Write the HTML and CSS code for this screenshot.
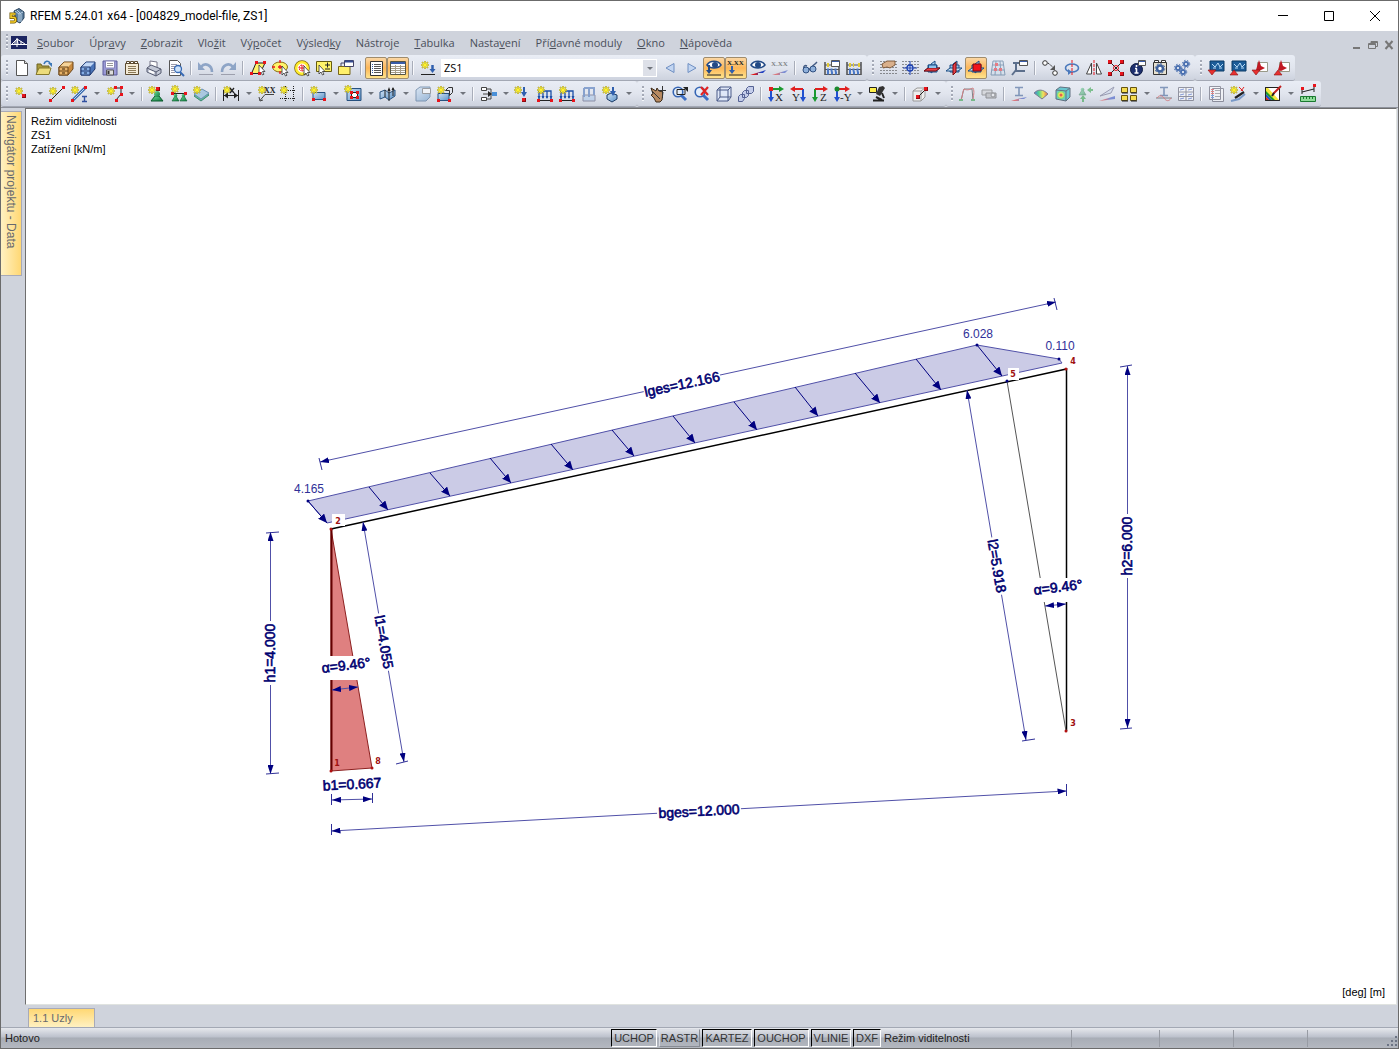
FILE: index.html
```html
<!DOCTYPE html>
<html lang="cs">
<head>
    <meta charset="UTF-8">
    <meta name="viewport" content="width=device-width, initial-scale=1.0">
    <title>RFEM 5.24.01 x64 - [004829_model-file, ZS1]</title>
    <link rel="stylesheet" href="styles.css">
</head>
<body>
<!-- shared icon parts -->
<svg class="defs" aria-hidden="true">
    <defs>
        <linearGradient id="gBlue" x1="0" y1="0" x2="1" y2="1"><stop offset="0" stop-color="#cfe2f5"/><stop offset="1" stop-color="#5b92c8"/></linearGradient>
        <linearGradient id="gGreen" x1="0" y1="0" x2="1" y2="1"><stop offset="0" stop-color="#6fdc98"/><stop offset="1" stop-color="#0f7a3e"/></linearGradient>
        <linearGradient id="gWedge" x1="0" x2="1"><stop offset=".3" stop-color="#e01818"/><stop offset=".7" stop-color="#2040c0"/></linearGradient>
        <linearGradient id="gRain" x1="0" x2="1"><stop offset="0" stop-color="#2a5be0"/><stop offset=".35" stop-color="#2fd07a"/><stop offset=".65" stop-color="#f4e63a"/><stop offset="1" stop-color="#e8402a"/></linearGradient>
        <g id="star"><path d="M4 0v8M0 4h8M1 1l6 6M7 1l-6 6" stroke="#a59a2c" stroke-width="1.6"/><path d="M4 .5v7M.5 4h7M1.5 1.5l5 5M6.5 1.5l-5 5" stroke="#fff22e" stroke-width="1"/><circle cx="4" cy="4" r="1.6" fill="#fff22e"/></g>
        <g id="n"><path d="M0 0h4v4h-4z" fill="#e8141c"/><path d="M0 3.500h4M3.500 0v4" stroke="#8c0a10"/></g>
        <g id="ns"><path d="M0 0h3v3h-3z" fill="#e8141c"/></g>
        <g id="cursor"><path d="M0 0v9l2-2 1.500 3 1.500-.8-1.500-2.700H6z" fill="#fff" stroke="#333" stroke-width=".8"/></g>
        <g id="cone"><path d="M3 4L0 9h7L4 4z" fill="url(#gGreen)" stroke="#0b5a2c" stroke-width=".6"/><circle cx="3.500" cy="3.500" r="1.800" fill="url(#gGreen)"/></g>
        <g id="dots"><path d="M.5 1.500h16M.5 4.500h16M.5 7.500h16M.5 10.500h16M.5 13.500h16" stroke="#333" stroke-dasharray="1 2"/></g>
        <g id="loads"><path d="M2 13V5h12v8M6 5v7M10 5v7" fill="none" stroke="#1d50a8" stroke-width="1.300"/><path d="M.5 10h3L2 13zM4.500 10h3L6 13zM8.500 10h3L10 13zM12.500 10h3L14 13z" fill="#1d50a8"/><path d="M0 14.500h16" stroke="#222"/></g>
        <g id="planes"><path d="M7 4l4-3v9l-4 3z" fill="#a9d2f2" stroke="#1d4f86"/><path d="M4 5h9v7H4z" fill="#8fc4ee" stroke="#1d4f86"/><path d="M0 11l4-3h12l-4 3z" fill="#c4e0f6" stroke="#1d4f86"/></g>
        <g id="glass"><path d="M9 9l5 5" stroke="#3d6fc4" stroke-width="3"/><circle cx="6" cy="6" r="4.800" fill="#e6f1fd" fill-opacity=".7" stroke="#3565b4" stroke-width="1.600"/></g>
        <g id="abacus"><path d="M1 2v13M15 2v13" stroke="#444" stroke-width="1.400"/><path d="M1 5h14M1 9.500h14M1 14.500h14" stroke="#555"/><path d="M3 5h2M7 5h1M12 5h2" stroke="#e3cb35" stroke-width="4"/><path d="M3 10h2M6.500 10h2M10.500 10h2M3 13h2M7 13h2M11 13h2" stroke="#4a78c8" stroke-width="3"/></g>
        <g id="screen"><path d="M2 1h14v10H2z" fill="#1c5c98" stroke="#0b3a66"/><path d="M4 4l3 3 3-4 2 4 3-3M5 8h3M11 8h3" stroke="#b8dcf8" fill="none"/></g>
    </defs>
</svg>

<div class="window">
    <header class="titlebar">
        <svg class="app-icon" viewBox="0 0 16 16"><path d="M5 3l5-2.500 5 3.500v6l-4 5-4-2z" fill="#5d7f9e" stroke="#27415c"/><path d="M6 3l4 3 4-2M8 2l4 4v8M10 6v8" stroke="#b9d0e4" fill="none"/><path d="M6.500 6H2v3.500h3c2 0 2 4.500 0 4.500H1" fill="none" stroke="#6e5600" stroke-width="3"/><path d="M6.500 6H2v3.500h3c2 0 2 4.500 0 4.500H1" fill="none" stroke="#f6ce2c" stroke-width="1.600"/></svg>
        <h1>RFEM 5.24.01 x64 - [004829_model-file, ZS1]</h1>
        <div class="window-buttons">
            <button type="button" aria-label="Minimalizovat"><svg viewBox="0 0 12 12"><path d="M1 5.500h10"/></svg></button>
            <button type="button" aria-label="Maximalizovat"><svg viewBox="0 0 12 12"><path d="M1.500 1.500h9v9h-9z"/></svg></button>
            <button type="button" aria-label="Zavřít"><svg viewBox="0 0 12 12"><path d="M1 1l10 10M11 1L1 11"/></svg></button>
        </div>
    </header>

    <nav class="menubar">
        <span class="grip"></span>
        <svg class="doc-icon" viewBox="0 0 16 13"><path d="M0 0h16v13H0z" fill="#1b2460"/><path d="M0 8.500h16M1 8l5-5 1 5M6 2v9M6 3l8 5M10 5v3M4 8V5" stroke="#fff" fill="none"/></svg>
        <button type="button"><u>S</u>oubor</button>
        <button type="button">Úpr<u>a</u>vy</button>
        <button type="button"><u>Z</u>obrazit</button>
        <button type="button">Vlo<u>ž</u>it</button>
        <button type="button">Vý<u>p</u>očet</button>
        <button type="button">Výsled<u>k</u>y</button>
        <button type="button">Nástro<u>j</u>e</button>
        <button type="button"><u>T</u>abulka</button>
        <button type="button">Nasta<u>v</u>ení</button>
        <button type="button">Pří<u>d</u>avné moduly</button>
        <button type="button"><u>O</u>kno</button>
        <button type="button"><u>N</u>ápověda</button>
        <div class="mdi-buttons">
            <button type="button" aria-label="Minimalizovat dokument"><svg viewBox="0 0 10 10"><path d="M1 8h7" stroke-width="2"/></svg></button>
            <button type="button" aria-label="Obnovit dokument"><svg viewBox="0 0 10 10"><path d="M3 3V1.500h6.500v5H8M.5 3.500h7v5h-7zM.5 4.500h7M3 2.500h6"/></svg></button>
            <button type="button" aria-label="Zavřít dokument"><svg viewBox="0 0 10 10"><path d="M1.500 1l7 8M8.500 1l-7 8" stroke-width="2"/></svg></button>
        </div>
    </nav>

    <div class="toolbar-row">
        <div class="toolbar">
            <span class="grip"></span>
            <button type="button" class="tool" aria-label="Nový"><svg><path d="M2.500.5h8l3 3v12h-11z" fill="#fff" stroke="#555"/><path d="M10.500.5v3h3" fill="#ddd" stroke="#555"/></svg></button>
            <button type="button" class="tool" aria-label="Otevřít"><svg><path d="M1 14V4h4l1 2h7v8z" fill="#a99a3e" stroke="#6f6420"/><path d="M0 14.500L3 8h12l-2 6.500z" fill="#ecdc7c" stroke="#85782c"/><path d="M8 4c1-3 4-4 6-1" fill="none" stroke="#3c78b8" stroke-width="1.600"/><path d="M12 3h4v4z" fill="#3c78b8"/></svg></button>
            <button type="button" class="tool" aria-label="Projekty"><svg><path d="M1 7l5-5h9v7l-5 6H1z" fill="#c98a3e" stroke="#6b4518"/><path d="M1.500 7L6 2.500h8.500L10 7z" fill="#f6d49a"/><path d="M1 7h9v8H1z" fill="#e9b46a" stroke="#6b4518"/><path d="M1 11h9" stroke="#6b4518"/><path d="M4 9h3M4 13h3" stroke="#3a2208"/></svg></button>
            <button type="button" class="tool" aria-label="Bloky"><svg><path d="M1 7l5-5h9v7l-5 6H1z" fill="#4a74b8" stroke="#1b356c"/><path d="M1.500 7L6 2.500h8.500L10 7z" fill="#c2d8f6"/><path d="M1 7h9v8H1z" fill="#86aee6" stroke="#1b356c"/><path d="M1 11h9" stroke="#1b356c"/><path d="M4 9h3M4 13h3" stroke="#10254e"/></svg></button>
            <button type="button" class="tool" aria-label="Uložit"><svg><path d="M1 1h14v14H1z" fill="#9a9ad6" stroke="#5c5c9c"/><path d="M3.500 1h9v7h-9z" fill="#fff" stroke="#88b"/><path d="M5 3.500h6M5 5.500h6" stroke="#999"/><path d="M4.500 10h7v5h-7z" fill="#ddd" stroke="#555"/><path d="M6.500 11v3" stroke="#333" stroke-width="2"/></svg></button>
            <button type="button" class="tool" aria-label="Protokol"><svg><path d="M1.500 3.500h13v11h-13z" fill="#f3ead6" stroke="#5b4a30"/><path d="M2.500 3V1.500h3V3M6.500 3V1.500h3V3M10.500 3V1.500h3V3" fill="#fff" stroke="#5b4a30"/><path d="M4 6.500h8M4 8.500h8M4 10.500h8M4 12.500h8" stroke="#8c7a58"/></svg></button>
            <button type="button" class="tool" aria-label="Tisk"><svg><path d="M4 6V1l7 1v5" fill="#fff" stroke="#778"/><path d="M1 8l4-3 10 4v4l-5 3-9-4z" fill="#c3c8d6" stroke="#555b70"/><path d="M1 8l9 4 5-3M10 12v4" stroke="#555b70" fill="none"/><path d="M3 11l5 2" stroke="#fff" stroke-width="2"/></svg></button>
            <button type="button" class="tool" aria-label="Náhled"><svg><path d="M1.500.5h8l3 3v12h-11z" fill="#fff" stroke="#555"/><path d="M3 4.500h6M3 6.500h5M3 8.500h3M3 10.500h3M3 12.500h4" stroke="#99a"/><circle cx="10" cy="9" r="3.500" fill="#cfe4fa" stroke="#3769b4" stroke-width="1.300"/><path d="M12 12l4 4" stroke="#3769b4" stroke-width="2"/></svg></button>
            <span class="sep"></span>
            <button type="button" class="tool dim" aria-label="Zpět"><svg><path d="M3 7c4-5 11-2 11 5" fill="none" stroke="#3d66a0" stroke-width="2.600"/><path d="M0 2v8h7z" fill="#3d66a0"/><path d="M1 14.500h14" stroke="#667"/></svg></button>
            <button type="button" class="tool dim" aria-label="Znovu"><svg><path d="M13 7C9 2 2 5 2 12" fill="none" stroke="#3d66a0" stroke-width="2.600"/><path d="M16 2v8H9z" fill="#3d66a0"/><path d="M1 14.500h14" stroke="#667"/></svg></button>
            <span class="sep"></span>
            <button type="button" class="tool" aria-label="Výběr rovnoběžníkem"><svg><path d="M1.500 13.500L6 3h9l-5 10.500z" fill="#fff36a" stroke="#222"/><use href="#cursor" x="9" y="5"/><use href="#ns" x="5" y="1"/><use href="#ns" x="13" y="1"/><use href="#ns" x="0" y="12"/><use href="#ns" x="8" y="12"/></svg></button>
            <button type="button" class="tool" aria-label="Výběr elipsou"><svg><ellipse cx="8" cy="7" rx="7.500" ry="5" fill="#fff36a" stroke="#8a6f10"/><path d="M8 0v3M8 11v3M0 7h3M6 7h4M8 5v4" stroke="#e8141c" stroke-width="1.300"/><use href="#cursor" x="10" y="6"/></svg></button>
            <button type="button" class="tool" aria-label="Výběr prstencem"><svg><circle cx="8" cy="8" r="5.800" fill="none" stroke="#7c6a10" stroke-width="4"/><circle cx="8" cy="8" r="5.800" fill="#fff" stroke="#ffec2e" stroke-width="2.500"/><circle cx="8" cy="8" r="3" fill="none" stroke="#e8141c" stroke-dasharray="2 1"/><path d="M8 5v6M5 8h6" stroke="#e8141c"/><use href="#cursor" x="10" y="6"/></svg></button>
            <button type="button" class="tool" aria-label="Přidat k výběru"><svg><path d="M.5 1.500h15v10H.5z" fill="#fff36a" stroke="#665c10"/><path d="M9 5h5M11.500 2.500v5M9 9h5" stroke="#222"/><use href="#cursor" x="3" y="5"/></svg></button>
            <button type="button" class="tool" aria-label="Upravit okno"><svg><path d="M.5 6.500H12v8H.5z" fill="#fff06a" stroke="#77661a"/><path d="M6.500.5h9v6h-9z" fill="#fff" stroke="#446"/><path d="M7 1.500h8" stroke="#334a90" stroke-width="2"/><path d="M3 6V3h3" stroke="#446" fill="none"/></svg></button>
            <span class="sep"></span>
            <button type="button" class="tool active" aria-label="Navigátor"><svg><path d="M2.500 1.500h12v14h-12z" fill="#fff" stroke="#333"/><path d="M6 4.500h7M6 6.500h7M6 8.500h7M6 10.500h7M6 12.500h7" stroke="#555"/><path d="M4.500 4v10" stroke="#335ca8" stroke-dasharray="1 1"/></svg></button>
            <button type="button" class="tool active" aria-label="Tabulky"><svg><path d="M.5 1.500h15v13H.5z" fill="#fff" stroke="#554"/><path d="M1 3h14" stroke="#3a5ca8" stroke-width="2"/><path d="M1 6.500h14M1 8.500h14M1 10.500h14M1 12.500h14M5.500 5v9M10.500 5v9" stroke="#a59c88"/></svg></button>
            <span class="sep"></span>
            <button type="button" class="tool" aria-label="Nový zatěžovací stav"><svg><use href="#star" x="1" y="1"/><path d="M12.500 5v6" stroke="#2f5fae" stroke-width="2.500"/><path d="M9.500 9h6l-3 4z" fill="#2f5fae"/><path d="M1 14.500h14" stroke="#222"/></svg></button>
            <span class="combo"><select aria-label="Zatěžovací stav"><option>ZS1</option></select></span>
            <button type="button" class="tool" aria-label="Předchozí"><svg><path d="M12 3.500v9L4 8z" fill="#c3d6f2" stroke="#6f8fc2"/></svg></button>
            <button type="button" class="tool" aria-label="Další"><svg><path d="M4 3.500v9L12 8z" fill="#c3d6f2" stroke="#6f8fc2"/></svg></button>
            <button type="button" class="tool active" aria-label="Zobrazit zatížení"><svg><path d="M1 5c3-5 11-5 14 0-3 4-11 4-14 0z" fill="#fff" stroke="#234a86" stroke-width="1.500"/><circle cx="9" cy="5" r="3" fill="#234a86"/><path d="M3 5v7" stroke="#234a86" stroke-width="2"/><path d="M0 10h6l-3 4z" fill="#234a86"/><path d="M1 15h14" stroke="#222"/></svg></button>
            <button type="button" class="tool active" aria-label="Hodnoty zatížení"><svg><text x="-1" y="5" class="icon-text small">X.XX</text><path d="M4 6v5" stroke="#2f5fae" stroke-width="2"/><path d="M1 10h6l-3 4z" fill="#2f5fae"/><path d="M1 15h14" stroke="#222"/></svg></button>
            <button type="button" class="tool" aria-label="Zobrazit výsledky"><svg><path d="M1 5c3-5 11-5 14 0-3 4-11 4-14 0z" fill="#fff" stroke="#234a86" stroke-width="1.500"/><circle cx="8" cy="5" r="3" fill="#234a86"/><path d="M0 15l8-2.500V15zM8 12.500L16 10l-3 3H8z" fill="url(#gWedge)"/></svg></button>
            <button type="button" class="tool dim" aria-label="Hodnoty výsledků"><svg><text x="-1" y="6" class="icon-text small">X.XX</text><path d="M0 15l8-2.500V15zM8 12.500L16 10l-3 3H8z" fill="url(#gWedge)"/></svg></button>
            <span class="sep"></span>
            <button type="button" class="tool" aria-label="Viditelnost"><svg><path d="M2 9c-1-3 1-4 3-3M7 10c2-3 4-4 8-8" fill="none" stroke="#445c84" stroke-width="1.500"/><circle cx="4" cy="10" r="3" fill="#8fb0da" stroke="#2f4f80"/><circle cx="11" cy="9" r="3" fill="#8fb0da" stroke="#2f4f80"/></svg></button>
            <button type="button" class="tool" aria-label="Nastavení výpočtu"><svg><use href="#abacus"/><path d="M7.500.5h8v6h-8z" fill="#fff" stroke="#555"/><path d="M8 1.500h7" stroke="#3a5ca8"/></svg></button>
            <button type="button" class="tool" aria-label="Spočítat vše"><svg><use href="#abacus"/></svg></button>
        </div>
        <div class="toolbar">
            <span class="grip"></span>
            <button type="button" class="tool" aria-label="Rastr"><svg><use href="#dots"/><path d="M2 4l5-3h8v4l-5 3-3-1-4 1z" fill="#d9b08c" stroke="#6a4424" stroke-width=".8"/></svg></button>
            <button type="button" class="tool" aria-label="Uchopení"><svg><use href="#dots"/><circle cx="8" cy="8" r="3" fill="#dbe8ff" stroke="#1a3fb0" stroke-width="1.300"/><path d="M8 1v14M1 8h14" stroke="#1a3fb0"/></svg></button>
            <button type="button" class="tool" aria-label="Rovina XY"><svg><use href="#planes"/><path d="M0 11l4-3h12l-4 3z" fill="#e8414a" stroke="#7a0a0e"/><path d="M4.500 8V5h8v3" fill="#8fc4ee" stroke="#1d4f86"/></svg></button>
            <button type="button" class="tool" aria-label="Rovina YZ"><svg><use href="#planes"/><path d="M7 5l3-3v10l-3 3z" fill="#e8414a" stroke="#7a0a0e"/></svg></button>
            <button type="button" class="tool active" aria-label="Rovina XZ"><svg><use href="#planes"/><path d="M5 4h8v7H5z" fill="#f0141c" stroke="#7a0a0e"/></svg></button>
            <button type="button" class="tool dim" aria-label="Síť"><svg><path d="M3 1h10l2 14H1zM2 5h12M1.500 10h13M6 1L5 15M10 1l1 14" fill="#d4e2f0" stroke="#345c84"/><use href="#ns" x="5" y="3"/><use href="#ns" x="9" y="8"/><use href="#ns" x="4" y="8"/></svg></button>
            <button type="button" class="tool" aria-label="Souřadný systém"><svg><path d="M4 2v9h9" stroke="#5c6f8c" fill="none" stroke-width="2"/><path d="M4 10l-4 5" stroke="#5c6f8c" stroke-width="2"/><path d="M7.500.5h8v5h-8z" fill="#fff" stroke="#555"/><path d="M8 1.500h7" stroke="#3a5ca8"/><path d="M1 3h6" stroke="#5c6f8c" stroke-width="2"/></svg></button>
            <span class="sep"></span>
            <button type="button" class="tool" aria-label="Posunout"><svg><circle cx="3" cy="3" r="2.300" fill="#fff" stroke="#333"/><circle cx="13" cy="13" r="2.300" fill="#fff" stroke="#333"/><path d="M6 3l6 5" stroke="#333" stroke-dasharray="2 1"/><path d="M13 5v5H8z" fill="#555"/></svg></button>
            <button type="button" class="tool" aria-label="Otočit"><svg><ellipse cx="8" cy="8" rx="6.500" ry="4" fill="none" stroke="#4a79bc" stroke-width="1.600"/><path d="M4 9v6l4-3z" fill="#4a79bc"/><path d="M8 0v16" stroke="#e8141c" stroke-dasharray="3 1"/></svg></button>
            <button type="button" class="tool" aria-label="Zrcadlit"><svg><path d="M5.500 3v11H.5zM10.500 3v11h5z" fill="#fff" stroke="#444"/><path d="M8 0v16" stroke="#e8141c" stroke-dasharray="3 1"/></svg></button>
            <button type="button" class="tool" aria-label="Spojit"><svg><path d="M2 2l12 12M14 2L2 14" stroke="#222"/><circle cx="8" cy="8" r="2.500" fill="none" stroke="#e8141c"/><use href="#n" x="0" y="0"/><use href="#n" x="12" y="0"/><use href="#n" x="0" y="12"/><use href="#n" x="12" y="12"/></svg></button>
            <button type="button" class="tool" aria-label="Informace"><svg><circle cx="6.500" cy="9.500" r="6" fill="#1d2f6e" stroke="#0d1940"/><path d="M6.500 5v2M6.500 8.500v4.500M5 8.500h2M4.500 13h4" stroke="#fff" stroke-width="1.600"/><path d="M8.500.5h7v5h-7z" fill="#fff" stroke="#555"/><path d="M9 1.500h6" stroke="#3a5ca8"/></svg></button>
            <button type="button" class="tool" aria-label="Přídavný modul"><svg><path d="M1.500 2.500h13v12h-13z" fill="#e8e2d0" stroke="#333"/><path d="M2.500 2V.5h4V2M9.500 2V.5h4V2" stroke="#333" fill="#fff"/><circle cx="8" cy="8.500" r="3" fill="#fff" stroke="#3e619c" stroke-width="2.500"/><circle cx="8" cy="8.500" r="4.800" fill="none" stroke="#3e619c" stroke-dasharray="2 1.700"/></svg></button>
            <button type="button" class="tool" aria-label="Nastavení"><svg><g fill="#fff" stroke="#4a70b0" stroke-width="2"><circle cx="4" cy="8" r="2"/><circle cx="9" cy="12" r="2"/><circle cx="12" cy="4" r="2"/></g><g fill="none" stroke="#4a70b0" stroke-dasharray="1.500 1.500"><circle cx="4" cy="8" r="3.700"/><circle cx="9" cy="12" r="3.700"/><circle cx="12" cy="4" r="3.700"/></g></svg></button>
        </div>
        <div class="toolbar">
            <span class="grip"></span>
            <button type="button" class="tool" aria-label="Import"><svg><use href="#screen"/><path d="M0 10h8l-4 5z" fill="#e83030" stroke="#8a1010" stroke-width=".6"/></svg></button>
            <button type="button" class="tool" aria-label="Export"><svg><use href="#screen"/><path d="M0 15h8l-4-5z" fill="#e83030" stroke="#8a1010" stroke-width=".6"/></svg></button>
            <button type="button" class="tool" aria-label="Import PDF"><svg><path d="M5.500 2.500h10v9h-10z" fill="#fff" stroke="#998"/><path d="M7 0l2 6 4 2-6 3-3-1z" fill="#c01822"/><path d="M0 10h8l-4 5z" fill="#e83030" stroke="#8a1010" stroke-width=".6"/></svg></button>
            <button type="button" class="tool" aria-label="Export PDF"><svg><path d="M5.500 2.500h10v9h-10z" fill="#fff" stroke="#998"/><path d="M7 0l2 6 4 2-6 3-3-1z" fill="#c01822"/><path d="M0 15h8l-4-5z" fill="#e83030" stroke="#8a1010" stroke-width=".6"/></svg></button>
        </div>
    </div>

    <div class="toolbar-row">
        <div class="toolbar">
            <span class="grip"></span>
            <button type="button" class="tool" aria-label="Nový uzel"><svg><use href="#star" x="1" y="1"/><use href="#n" x="8" y="8"/></svg></button>
            <button type="button" class="drop" aria-label="Uzel, možnosti"></button>
            <button type="button" class="tool" aria-label="Nová linie"><svg><use href="#star" x="0" y="1"/><path d="M2 14L14 2" stroke="#222"/><use href="#ns" x="13" y="0"/><use href="#ns" x="0" y="13"/></svg></button>
            <button type="button" class="tool" aria-label="Nový prut"><svg><use href="#star" x="0" y="0"/><path d="M2 14L14 2" stroke="#3768ac" stroke-width="3"/><path d="M3 13L13 3" stroke="#bcd6f2"/><use href="#ns" x="0" y="13"/><use href="#ns" x="13" y="0"/><path d="M11 10.500h5M11 15.500h5M13.500 10v5" stroke="#3050a0" stroke-width="1.400"/></svg></button>
            <button type="button" class="drop" aria-label="Prut, možnosti"></button>
            <button type="button" class="tool" aria-label="Nová lomená linie"><svg><use href="#star" x="1" y="1"/><path d="M9 2h6v6l-5 6" stroke="#222" fill="none"/><use href="#ns" x="8" y="0"/><use href="#ns" x="14" y="0"/><use href="#ns" x="14" y="7"/><use href="#ns" x="9" y="13"/></svg></button>
            <button type="button" class="drop" aria-label="Lomená linie, možnosti"></button>
            <span class="sep"></span>
            <button type="button" class="tool" aria-label="Uzlová podpora"><svg><path d="M6 10l-4 5h12l-4-5z" fill="url(#gGreen)" stroke="#0b5a2c"/><circle cx="8" cy="8" r="3" fill="url(#gGreen)"/><use href="#star" x="-1" y="0"/><use href="#n" x="7" y="1"/></svg></button>
            <button type="button" class="tool" aria-label="Liniová podpora"><svg><path d="M1 7.500h14" stroke="#222"/><use href="#cone" x="1" y="6"/><use href="#cone" x="9" y="6"/><use href="#star" x="0" y="-1"/><use href="#ns" x="0" y="6"/><use href="#ns" x="13" y="6"/></svg></button>
            <button type="button" class="tool" aria-label="Plošná podpora"><svg><path d="M1 10l8-5 7 4-8 6z" fill="#64bd9a" stroke="#3c8a70"/><path d="M1 8l8-5 7 4-8 6z" fill="#a9c8e0" stroke="#6890b4"/><use href="#star" x="0" y="0"/></svg></button>
            <span class="sep"></span>
            <button type="button" class="tool" aria-label="Kóta"><svg><use href="#star" x="0" y="0"/><path d="M.5 4v11M15.500 4v11M1 9.500h14" stroke="#222"/><path d="M1 9.500l4-3v6zM15 9.500l-4-3v6z" fill="#222"/><path d="M7 2l4 5M11 2L7 7" stroke="#222" stroke-width="1.300"/></svg></button>
            <button type="button" class="drop" aria-label="Kóta, možnosti"></button>
            <button type="button" class="tool" aria-label="Komentář"><svg><use href="#star" x="0" y="0"/><text x="6" y="7" class="icon-text">XX</text><path d="M16 8.500H7l-5 6M1 11l1 4 3-1" stroke="#444" fill="none"/></svg></button>
            <button type="button" class="tool" aria-label="Vodicí linie"><svg><path d="M5.500 0v16M13.500 0v16M0 4.500h16M0 12.500h16" stroke="#222" stroke-dasharray="1 1"/><use href="#star" x="0" y="0"/></svg></button>
            <span class="sep"></span>
            <button type="button" class="tool" aria-label="Nová plocha"><svg><path d="M3 6.500h12v7H3z" fill="url(#gBlue)" stroke="#27517f"/><use href="#star" x="0" y="0"/><use href="#ns" x="2" y="12"/><use href="#ns" x="13" y="12"/></svg></button>
            <button type="button" class="drop" aria-label="Plocha, možnosti"></button>
            <button type="button" class="tool" aria-label="Nový otvor"><svg><path d="M2 2.500h14v12H2z" fill="url(#gBlue)" stroke="#27517f"/><path d="M6.500 6.500h6v5h-6z" fill="#fff" stroke="#222"/><use href="#star" x="-1" y="-1"/><use href="#ns" x="5" y="10"/><use href="#ns" x="11" y="10"/><use href="#ns" x="11" y="5"/><use href="#ns" x="5" y="5"/></svg></button>
            <button type="button" class="drop" aria-label="Otvor, možnosti"></button>
            <button type="button" class="tool" aria-label="Rozdělit plochu"><svg><path d="M0 6l5-2 4 3 6-3v6l-6 4-4-3-5 2z" fill="url(#gBlue)" stroke="#27517f"/><path d="M5 4v7M9 3v12M13 2v8" stroke="#222"/><path d="M7.500 5L9 1l1.500 4zM11.500 4L13 1l1.500 3z" fill="#222"/></svg></button>
            <button type="button" class="drop" aria-label="Rozdělit, možnosti"></button>
            <button type="button" class="tool dim" aria-label="Nové těleso"><svg><path d="M1 4l4-3h10v10l-4 4H1z" fill="url(#gBlue)" stroke="#27517f"/><path d="M7.500 2.500h8v5h-8z" fill="#fff" stroke="#555"/></svg></button>
            <button type="button" class="tool" aria-label="Nové těleso z ploch"><svg><path d="M1 7.500h11v7H1z" fill="url(#gBlue)" stroke="#27517f"/><path d="M8.500 4.500l3-3h4v5l-3 3M8.500 4.500h4v5" stroke="#333" fill="none"/><use href="#star" x="0" y="0"/><use href="#ns" x="0" y="13"/><use href="#ns" x="11" y="13"/></svg></button>
            <button type="button" class="drop" aria-label="Těleso, možnosti"></button>
            <span class="sep"></span>
            <button type="button" class="tool" aria-label="Kombinace"><svg><path d="M1.500 1.500h5v3h-5zM1.500 11.500h5v3h-5z" fill="#fff" stroke="#444"/><path d="M7 3h4v10H7M3 8h6" stroke="#444" fill="none"/><path d="M8 5l4 3-4 3z" fill="#222"/><path d="M12 6h5v4h-5z" fill="#4a90d8"/></svg></button>
            <button type="button" class="drop" aria-label="Kombinace, možnosti"></button>
            <button type="button" class="tool" aria-label="Zatížení na uzel"><svg><use href="#star" x="-1" y="0"/><path d="M9 1v7" stroke="#2f5fae" stroke-width="2"/><path d="M6 6h6l-3 5z" fill="#2f5fae"/><use href="#n" x="7" y="12"/></svg></button>
            <button type="button" class="tool" aria-label="Zatížení na prut"><svg><use href="#loads"/><use href="#star" x="0" y="0"/><use href="#ns" x="0" y="13"/><use href="#ns" x="13" y="13"/></svg></button>
            <button type="button" class="tool" aria-label="Zatížení na linii"><svg><use href="#loads"/><use href="#star" x="0" y="0"/><use href="#ns" x="0" y="13"/><use href="#ns" x="13" y="13"/></svg></button>
            <button type="button" class="tool dim" aria-label="Zatížení na plochu"><svg><path d="M2 9h12v6H2z" fill="#a8c8ec" stroke="#446"/><path d="M3 2h10v7M3 2v9M8 2v9" fill="none" stroke="#2f5fae" stroke-width="2"/></svg></button>
            <button type="button" class="tool" aria-label="Zatížení na těleso"><svg><path d="M4 9l4-2 6 2v4l-5 3-5-3z" fill="url(#gBlue)" stroke="#1b3b66"/><path d="M10 1v6" stroke="#2f5fae" stroke-width="2"/><path d="M7 5h6l-3 5z" fill="#2f5fae"/><use href="#star" x="-1" y="0"/></svg></button>
            <button type="button" class="drop" aria-label="Zatížení, možnosti"></button>
        </div>
        <div class="toolbar">
            <span class="grip"></span>
            <button type="button" class="tool" aria-label="Posun zobrazení"><svg><path d="M1 2l5 3 1-3 2 3 4 1-1 8-2 2H6l-2-4-3-3 2-1z" fill="#b88a62" stroke="#3c2a18"/><path d="M12.500 0v12M8 4.500h8M2 5l8 8" stroke="#333"/></svg></button>
            <button type="button" class="tool" aria-label="Lupa okna"><svg><use href="#glass"/><path d="M5 3.500h8v5H5z" fill="none" stroke="#222"/><path d="M11 1h5v5z" fill="#222"/></svg></button>
            <button type="button" class="tool" aria-label="Celé zobrazení"><svg><use href="#glass"/><path d="M7 1l7 8M14 1L7 9" stroke="#e02424" stroke-width="2.200"/></svg></button>
            <button type="button" class="tool" aria-label="Izometrie"><svg><path d="M1 4l3-3h11v10l-3 4H1zM1 4h11v11M12 4l3-3M4 1v10h11M4 11l-3 4" fill="#dfe7f8" stroke="#4a5a88"/></svg></button>
            <button type="button" class="tool" aria-label="Perspektiva"><svg><path d="M8.500 2.500l2-2h5v5l-2 2h-5zM4.500 6.500l2-2h4v5l-2 2h-4zM.5 10.500l2-2h4v4l-2 3h-4z" fill="#c4cdea" stroke="#556294"/></svg></button>
            <span class="sep"></span>
            <button type="button" class="tool" aria-label="Pohled X"><svg><path d="M3 3v10" stroke="#2050d0" stroke-width="2"/><path d="M3 3h9" stroke="#1a9a30" stroke-width="2"/><path d="M0 11h6l-3 5z" fill="#2050d0"/><path d="M11 0v6l5-3z" fill="#1a9a30"/><path d="M1 1h4v4H1z" fill="#e02020"/><text x="7" y="15" class="icon-text axis">X</text></svg></button>
            <button type="button" class="tool" aria-label="Pohled Y"><svg><path d="M13 3v10" stroke="#2050d0" stroke-width="2"/><path d="M13 3H4" stroke="#e02020" stroke-width="2"/><path d="M10 11h6l-3 5z" fill="#2050d0"/><path d="M5 0v6L0 3z" fill="#e02020"/><text x="2" y="15" class="icon-text axis">Y</text></svg></button>
            <button type="button" class="tool" aria-label="Pohled Z"><svg><path d="M3 3v10" stroke="#1a9a30" stroke-width="2"/><path d="M3 3h9" stroke="#e02020" stroke-width="2"/><path d="M0 11h6l-3 5z" fill="#1a9a30"/><path d="M11 0v6l5-3z" fill="#e02020"/><text x="8" y="15" class="icon-text axis">Z</text></svg></button>
            <button type="button" class="tool" aria-label="Pohled -Y"><svg><path d="M3 3v10" stroke="#2050d0" stroke-width="2"/><path d="M3 3h9" stroke="#e02020" stroke-width="2"/><path d="M0 11h6l-3 5z" fill="#2050d0"/><path d="M11 0v6l5-3z" fill="#e02020"/><circle cx="3" cy="3" r="2.500" fill="#1a8a30"/><text x="6" y="15" class="icon-text axis">-Y</text></svg></button>
            <button type="button" class="drop" aria-label="Pohledy"></button>
            <button type="button" class="tool" aria-label="Vykreslení"><svg><path d="M10 1l4-1 2 2-5 8-4-2z" fill="#333"/><path d="M4 14.500h11M7 11l6 3M13 7l2 5" stroke="#222" stroke-width="2"/><path d="M.5 1.500h7v5h-7z" fill="#fff04a" stroke="#222"/></svg></button>
            <button type="button" class="drop" aria-label="Vykreslení, možnosti"></button>
            <span class="sep"></span>
            <button type="button" class="tool" aria-label="Řez"><svg><path d="M1 5l4-3h8v9l-4 4H1zM1 5h8v10M9 5l4-3" fill="#eee" stroke="#999"/><path d="M6 11l8-8" stroke="#222"/><use href="#n" x="12" y="1"/><use href="#n" x="4" y="9"/></svg></button>
            <button type="button" class="drop" aria-label="Řez, možnosti"></button>
        </div>
        <div class="toolbar">
            <span class="grip"></span>
            <button type="button" class="tool dim" aria-label="Deformace"><svg><path d="M2 14L5 3h8l1 11" fill="none" stroke="#222"/><path d="M2 14c2-4 1-8 3-11 4 2 6 0 9-1 2 4 0 8 0 12" fill="none" stroke="#c02020"/><path d="M0 14h4M12 14h4" stroke="#1a9a30" stroke-width="2"/></svg></button>
            <button type="button" class="tool dim" aria-label="Animace"><svg><path d="M1 4h10v5H1z" fill="#ccc" stroke="#555"/><path d="M5 7h10v5H5z" fill="#aaa" stroke="#444"/><circle cx="12" cy="9" r="2" fill="#eee" stroke="#444"/></svg></button>
            <span class="sep"></span>
            <button type="button" class="tool dim" aria-label="Vnitřní síly"><svg><path d="M4 1.500h8M8 2v8M4 9.500h8" stroke="#234a86" stroke-width="1.600"/><path d="M0 15l8-2.500V15zM8 12.500L16 11l-3 2H8z" fill="url(#gWedge)"/></svg></button>
            <button type="button" class="tool fade" aria-label="Plochy výsledky"><svg><path d="M1 7c4-4 9-4 14 1l-6 5z" fill="url(#gRain)" stroke="#667"/></svg></button>
            <button type="button" class="tool fade" aria-label="Tělesa výsledky"><svg><path d="M1 4l4-3 10 1v9l-4 4-10-2z" fill="#4cc0c8" stroke="#456"/><path d="M1 4l10 1 4-3M11 5v10" stroke="#456" fill="none"/><circle cx="6" cy="9" r="4" fill="#6fdc60"/><circle cx="6" cy="9" r="2.800" fill="#f4e63a"/><circle cx="6" cy="9" r="1.500" fill="#e8402a"/></svg></button>
            <button type="button" class="tool dim" aria-label="Reakce"><svg><use href="#cone" x="2" y="0"/><path d="M6 10v6" stroke="#1a9a30" stroke-width="2"/><path d="M3 13l3-4 3 4zM10 4l4-3v6z" fill="#1a9a30"/><path d="M12 4h4" stroke="#1a9a30" stroke-width="2"/></svg></button>
            <button type="button" class="tool dim" aria-label="Průběhy"><svg><path d="M1 10L15 1l-3 6z" fill="#ccd8ee" stroke="#557"/><path d="M0 15l16-5v3z" fill="url(#gWedge)"/></svg></button>
            <button type="button" class="tool" aria-label="Okna"><svg><g fill="#f5dc50" stroke="#665410"><path d="M.5 1.500h6v5h-6zM9.500 1.500h6v5h-6zM.5 9.500h6v5h-6zM9.500 9.500h6v5h-6z"/></g><path d="M1 7h6M10 7h6M1 15h6M10 15h6" stroke="#222"/></svg></button>
            <button type="button" class="drop" aria-label="Okna, možnosti"></button>
            <button type="button" class="tool dim" aria-label="Průřez"><svg><path d="M4 1.500h8M8 2v7M4 9.500h8" stroke="#234a86" stroke-width="1.600"/><path d="M0 12h16" stroke="#222"/><path d="M1 12c2-3 5-3 7 0s5 4 7 0" fill="none" stroke="#d02020"/></svg></button>
            <button type="button" class="tool dim" aria-label="Diagramy"><svg><path d="M.5 1.500h15v13H.5zM8 1v14M1 6h14M1 10.500h14" fill="#fff" stroke="#445"/><path d="M2 4l4-1M10 4l4-1M2 9l4-1M10 9l4-1M2 13l4-1M10 13l4-1" stroke="#2a50c0"/></svg></button>
            <span class="sep"></span>
            <button type="button" class="tool dim" aria-label="Panel"><svg><path d="M4.500 2.500h11v13h-11zM1.500.5h11v13h-11z" fill="#fff" stroke="#445"/><path d="M3 3.500h3M3 5.500h3M3 7.500h3" stroke="#e02020"/><path d="M3 9.500h3M3 11.500h3" stroke="#2060d0"/><path d="M7 4.500h5M7 7.500h5M7 10.500h5" stroke="#777"/></svg></button>
            <button type="button" class="tool" aria-label="Průvodce"><svg><path d="M5 12l9-6" stroke="#222" stroke-width="2.200"/><path d="M1 15l8-2 6-5" stroke="#7a9ac8" stroke-width="2" fill="none"/><use href="#star" x="0" y="0"/><path d="M9 1l4 4M14 1l-3 4" stroke="#e02020"/></svg></button>
            <button type="button" class="drop" aria-label="Průvodce, možnosti"></button>
            <button type="button" class="tool" aria-label="Barvy"><svg><path d="M.5 1.500h14v13H.5z" fill="#fff" stroke="#222"/><path d="M1 14V2h2l11 12z" fill="#f4e63a"/><path d="M1 5l9 9H7L1 8z" fill="#1a9a30"/><path d="M1 8l6 6H4l-3-3z" fill="#2050d0"/><path d="M1 11l3 3H1z" fill="#e02020"/><path d="M.5 1.500h14v13H.5z" stroke="#222"/><path d="M16 0L8 8" stroke="#c02020" stroke-width="2"/><path d="M9 7l-2 3" stroke="#222" stroke-width="2"/></svg></button>
            <button type="button" class="drop" aria-label="Barvy, možnosti"></button>
            <button type="button" class="tool" aria-label="Měření"><svg><path d="M2 6l12-3M2 3v5M14 0v6" stroke="#222"/><use href="#ns" x="1" y="1"/><use href="#ns" x="13" y="-2"/><path d="M.5 10.500h15v5H.5z" fill="#8fdc9a" stroke="#1a7a30"/><path d="M3.500 11v2M6.500 11v2M9.500 11v2M12.500 11v2" stroke="#1a7a30"/></svg></button>
        </div>
    </div>

    <div class="workspace">
        <aside class="dock">
            <button type="button" class="dock-tab">Navigátor projektu - Data</button>
        </aside>
        <main class="viewport">
            <div class="info">Režim viditelnosti<br>ZS1<br>Zatížení [kN/m]</div>
            <svg class="model" viewBox="26 109 1370 894" preserveAspectRatio="xMidYMin" role="img" aria-label="Model rámu se zatížením">
                <defs>
                    <marker id="dimArrow" markerWidth="9" markerHeight="6" refX="9" refY="3" markerUnits="userSpaceOnUse" orient="auto-start-reverse"><path d="M0 0l9 3-9 3z" fill="#000080"/></marker>
                    <marker id="loadArrow" markerWidth="9" markerHeight="8" refX="9" refY="4" markerUnits="userSpaceOnUse" orient="auto"><path d="M0 0l9 4-9 4z" fill="#000080"/></marker>
                </defs>

                <!-- distributed load on the rafter -->
                <path class="load" d="M308 501L977 345 1059 359 1062 363 327 523z"/>
                <g class="load-arrows">
                    <path d="M308 501L327 523"/>
                    <path d="M369 487L388 510"/>
                    <path d="M430 473L450 496"/>
                    <path d="M490 458L511 483"/>
                    <path d="M551 444L573 470"/>
                    <path d="M612 430L634 456"/>
                    <path d="M673 416L695 443"/>
                    <path d="M734 402L757 430"/>
                    <path d="M795 387L818 416"/>
                    <path d="M855 373L880 403"/>
                    <path d="M916 359L941 390"/>
                    <path d="M977 345L1002 376"/>
                </g>
                <g class="load-points"><circle cx="308" cy="501" r="1.500"/><circle cx="977" cy="345" r="1.500"/><circle cx="1059" cy="359" r="1.500"/></g>

                <!-- frame -->
                <path class="surface" d="M331 529L372 768 331 771z"/>
                <path class="edge" d="M331.500 529V771"/>
                <path class="member" d="M331 529L1066.500 369V731"/>
                <path class="thin" d="M1007 381L1066 731"/>
                <path class="blank" d="M322 656h50v24h-50zM1034 578h50v24h-50zM332 514h13v12h-13zM1008 368h11v12h-11z"/>
                <g class="nodes">
                    <circle cx="331" cy="529" r="1.500"/>
                    <circle cx="331" cy="771" r="1.500"/>
                    <circle cx="372" cy="768" r="1.500"/>
                    <circle cx="1066" cy="369" r="1.500"/>
                    <circle cx="1066" cy="731" r="1.500"/>
                </g>
                <circle class="hinge" cx="1007" cy="381" r="1.500"/>

                <!-- dimension lines -->
                <g class="dims">
                    <path d="M320 462L1056 302"/>
                    <path d="M331.500 831L1066.500 791"/>
                    <path d="M332 800L372 799"/>
                    <path d="M270.500 532V774"/>
                    <path d="M1127.500 366V728"/>
                    <path d="M363 522L404 762"/>
                    <path d="M967 390L1026 740"/>
                    <path d="M332 690L358 687"/>
                    <path d="M1045 606L1066 604"/>
                </g>
                <path class="ticks" d="M319 458l3 12M1054 298l3 12M331.500 824v11M1066.500 784v12M331.500 794v11M372.500 793v10M266 533l13-1M266 774l13-1M1120 367l12-2M1120 729l12-1M396 764l12-3M1022 741l13-2"/>

                <g class="dim-labels">
                    <g transform="translate(682 384) rotate(-12)"><rect x="-39" y="-8" width="78" height="16"/><text y="5">lges=12.166</text></g>
                    <g transform="translate(699 811) rotate(-3)"><rect x="-42" y="-8" width="84" height="16"/><text y="5">bges=12.000</text></g>
                    <g transform="translate(352 784) rotate(-3)"><text y="5">b1=0.667</text></g>
                    <g transform="translate(270 653) rotate(-90)"><rect x="-32" y="-8" width="64" height="16"/><text y="5">h1=4.000</text></g>
                    <g transform="translate(1127 546) rotate(-90)"><rect x="-32" y="-8" width="64" height="16"/><text y="5">h2=6.000</text></g>
                    <g transform="translate(384 642) rotate(80)"><rect x="-29" y="-8" width="58" height="16"/><text y="5">l1=4.055</text></g>
                    <g transform="translate(997 566) rotate(80)"><rect x="-29" y="-8" width="58" height="16"/><text y="5">l2=5.918</text></g>
                    <g transform="translate(346 665) rotate(-7)"><text y="5">α=9.46°</text></g>
                    <g transform="translate(1058 587) rotate(-7)"><text y="5">α=9.46°</text></g>
                </g>
                <g class="load-labels">
                    <text x="309" y="493">4.165</text>
                    <text x="978" y="338">6.028</text>
                    <text x="1060" y="350">0.110</text>
                </g>
                <g class="node-labels">
                    <text x="337" y="766">1</text>
                    <text x="338" y="524">2</text>
                    <text x="1073" y="726">3</text>
                    <text x="1073" y="364">4</text>
                    <text x="1013" y="377">5</text>
                    <text x="378" y="764">8</text>
                </g>
            </svg>
            <div class="units">[deg] [m]</div>
        </main>
    </div>

    <div class="table-tabs">
        <button type="button">1.1 Uzly</button>
    </div>

    <footer class="statusbar">
        <span class="status-text">Hotovo</span>
        <div class="toggles">
            <button type="button" class="on w46">UCHOP</button>
            <button type="button" class="w41">RASTR</button>
            <button type="button" class="on w50">KARTEZ</button>
            <button type="button" class="on w55">OUCHOP</button>
            <button type="button" class="on w40">VLINIE</button>
            <button type="button" class="on w28">DXF</button>
        </div>
        <span class="mode">Režim viditelnosti</span>
        <span class="pane w88"></span>
        <span class="pane w74"></span>
        <span class="pane w74"></span>
        <span class="pane last"><svg viewBox="0 0 11 11"><path d="M8 0h2v2H8zM4 4h2v2H4zM8 4h2v2H8zM0 8h2v2H0zM4 8h2v2H4zM8 8h2v2H8z" fill="#6c7484"/></svg></span>
    </footer>
</div>
</body>
</html>
```
FILE: styles.css
```css
* {
    box-sizing: border-box;
}

body {
    margin: 0;
    font-family: "Liberation Sans", Arial, sans-serif;
    font-size: 11px;
    color: #000;
}

button {
    margin: 0;
    padding: 0;
    border: none;
    background: none;
    font: inherit;
    color: inherit;
}

.defs {
    position: absolute;
    width: 0;
    height: 0;
}

.window {
    display: flex;
    flex-direction: column;
    height: 100vh;
    border: 1px solid #6b6b6b;
    background-color: #cfd3dc;
}

/* title bar */
.titlebar {
    display: flex;
    align-items: center;
    height: 30px;
    padding-left: 8px;
    background-color: #fff;
}

.app-icon {
    width: 16px;
    height: 16px;
    margin-right: 5px;
}

.titlebar h1 {
    flex: 1;
    margin: 0;
    font-family: Roboto, "Open Sans", sans-serif;
    font-size: 12px;
    font-weight: normal;
}

.window-buttons button {
    width: 46px;
    height: 28px;
}

.window-buttons {
    display: flex;
}

.window-buttons svg {
    display: block;
    width: 12px;
    height: 12px;
    margin: 0 auto;
    fill: none;
    stroke: #000;
}

/* menu */
.menubar {
    display: flex;
    align-items: center;
    height: 24px;
    padding-bottom: 2px;
    font-family: "Open Sans", "Noto Sans", sans-serif;
    color: #4a4f5a;
}

.menubar > button {
    margin-right: 15px;
    white-space: nowrap;
}

.doc-icon {
    width: 16px;
    height: 13px;
    margin-right: 10px;
}

.mdi-buttons {
    display: flex;
    gap: 6px;
    margin-left: auto;
    padding: 5px 4px 0 0;
}

.mdi-buttons svg {
    display: block;
    width: 10px;
    height: 10px;
    fill: none;
    stroke: #777;
}

/* toolbars */
.toolbar-row {
    display: flex;
    height: 26px;
}

.toolbar {
    display: flex;
    align-items: center;
    padding-right: 2px;
    border-bottom: 1px solid #a3a8b4;
    border-radius: 3px;
    background: linear-gradient(#e9edf5, #e1e5ee 50%, #cdd2de);
}

.grip {
    flex: none;
    width: 10px;
    height: 16px;
    background: linear-gradient(#a4a9b6 2px, #f6f8fb 2px, #f6f8fb 3px, transparent 3px) 5px 0 / 2px 4px repeat-y;
}

.tool {
    display: flex;
    align-items: center;
    justify-content: center;
    width: 22px;
    height: 22px;
}

.tool svg {
    flex: none;
    width: 16px;
    height: 16px;
    overflow: visible;
    fill: none;
}

.tool.active {
    border: 1px solid #a08c6c;
    border-radius: 2px;
    background: linear-gradient(#fcd7a4, #fcb658 50%, #ffe48c);
}

.tool.dim svg {
    opacity: 0.5;
}

.tool.fade svg {
    opacity: 0.8;
}

.icon-text {
    font-family: "Liberation Serif", serif;
    font-size: 8px;
    font-weight: bold;
    fill: #222;
}

.icon-text.small {
    font-size: 7px;
}

.icon-text.axis {
    font-size: 11px;
    font-weight: normal;
}

.drop {
    display: flex;
    align-items: center;
    justify-content: center;
    width: 13px;
    height: 22px;
}

.drop::before {
    content: "";
    border: 3px solid transparent;
    border-top-color: #70747c;
    border-bottom: none;
}

.sep {
    width: 8px;
    height: 14px;
    background: linear-gradient(90deg, #a8adb9 1px, #f8f9fc 1px, #f8f9fc 2px) no-repeat 3px 0 / 2px 14px;
}

.combo {
    position: relative;
    width: 220px;
    padding: 0 2px;
}

.combo select {
    display: block;
    width: 100%;
    height: 18px;
    padding: 0 3px;
    border: none;
    border-radius: 0;
    background: linear-gradient(90deg, #dde0e8, #dde0e8) no-repeat right 1px center / 13px 16px #fff;
    appearance: none;
    font-family: "Open Sans", "Noto Sans", sans-serif;
    font-size: 11px;
    color: #000;
}

.combo::after {
    content: "";
    position: absolute;
    top: 8px;
    right: 6px;
    border: 3px solid transparent;
    border-top-color: #70747c;
    border-bottom: none;
    pointer-events: none;
}

/* work area */
.workspace {
    display: flex;
    flex: 1;
    min-height: 0;
    border-top: 1px solid #8e929c;
}

.dock {
    width: 24px;
    padding-top: 3px;
}

.dock-tab {
    width: 21px;
    height: 165px;
    padding: 3px 0;
    border: 1px solid #a8aab8;
    border-left: none;
    background: linear-gradient(90deg, #fff1c2, #ffd874);
    writing-mode: vertical-rl;
    text-align: left;
    font-size: 12px;
    line-height: 20px;
    color: #66686e;
}

.viewport {
    position: relative;
    flex: 1;
    min-width: 0;
    margin-right: 1px;
    border: 1px solid #6e6e6e;
    border-right-color: #e0e3e0;
    border-bottom-color: #e0e3e0;
    background-color: #fff;
}

.info {
    position: absolute;
    top: 5px;
    left: 5px;
    line-height: 14px;
}

.units {
    position: absolute;
    right: 11px;
    bottom: 6px;
}

.model {
    display: block;
    width: 100%;
    height: 100%;
}

.load {
    fill: #cbcbe6;
    stroke: #5050a8;
}

.load-arrows path {
    stroke: #000080;
    marker-end: url(#loadArrow);
}

.load-points,
.hinge {
    fill: #000080;
}

.surface {
    fill: #df8080;
    stroke: #8c2020;
}

.edge {
    stroke: #640000;
    stroke-width: 2;
}

.member {
    fill: none;
    stroke: #000;
    stroke-width: 1.5;
}

.thin {
    stroke: #555;
}

.blank,
.dim-labels rect {
    fill: #fff;
}

.nodes {
    fill: #b01010;
}

.dims path {
    stroke: #5050a8;
    marker-start: url(#dimArrow);
    marker-end: url(#dimArrow);
}

.ticks {
    fill: none;
    stroke: #303098;
}

.model text {
    text-anchor: middle;
}

.dim-labels text {
    font-size: 14px;
    fill: #000070;
    stroke: #000070;
    stroke-width: 0.6;
}

.load-labels text {
    font-size: 12px;
    fill: #303098;
}

.node-labels text {
    font-family: "DejaVu Sans", sans-serif;
    font-size: 8px;
    font-weight: bold;
    fill: #a01010;
}

/* bottom bars */
.table-tabs {
    height: 23px;
    padding: 3px 0 0 27px;
    border-bottom: 1px solid #a3a8b4;
}

.table-tabs button {
    width: 67px;
    height: 19px;
    padding-left: 4px;
    border: 1px solid #a8aab8;
    border-bottom: none;
    background: linear-gradient(#ffd874, #fff1c2);
    text-align: left;
    color: #66686e;
}

.statusbar {
    display: flex;
    align-items: center;
    height: 20px;
    background: linear-gradient(#e6e8ed, #bcc1cc 45%, #a8adb6 50%, #b4b8c0);
    color: #222;
}

.status-text {
    flex: 1;
    padding-left: 4px;
}

.toggles {
    display: flex;
    gap: 2px;
}

.toggles button {
    height: 18px;
    border: 1px solid;
    border-color: #d8dbe2 #888c94 #888c94 #d8dbe2;
    color: #333;
}

.toggles .on {
    border-color: #000 #fff #fff #000;
}

.mode {
    width: 190px;
    padding-left: 3px;
}

.pane {
    height: 17px;
    border-left: 1px solid #989ca4;
}

.pane.last {
    display: flex;
    align-items: flex-end;
    justify-content: flex-end;
    width: 91px;
}

.pane svg {
    width: 11px;
    height: 11px;
}

.w28 { width: 28px; }
.w40 { width: 40px; }
.w41 { width: 41px; }
.w46 { width: 46px; }
.w50 { width: 50px; }
.w55 { width: 55px; }
.w74 { width: 74px; }
.w88 { width: 88px; }
```
